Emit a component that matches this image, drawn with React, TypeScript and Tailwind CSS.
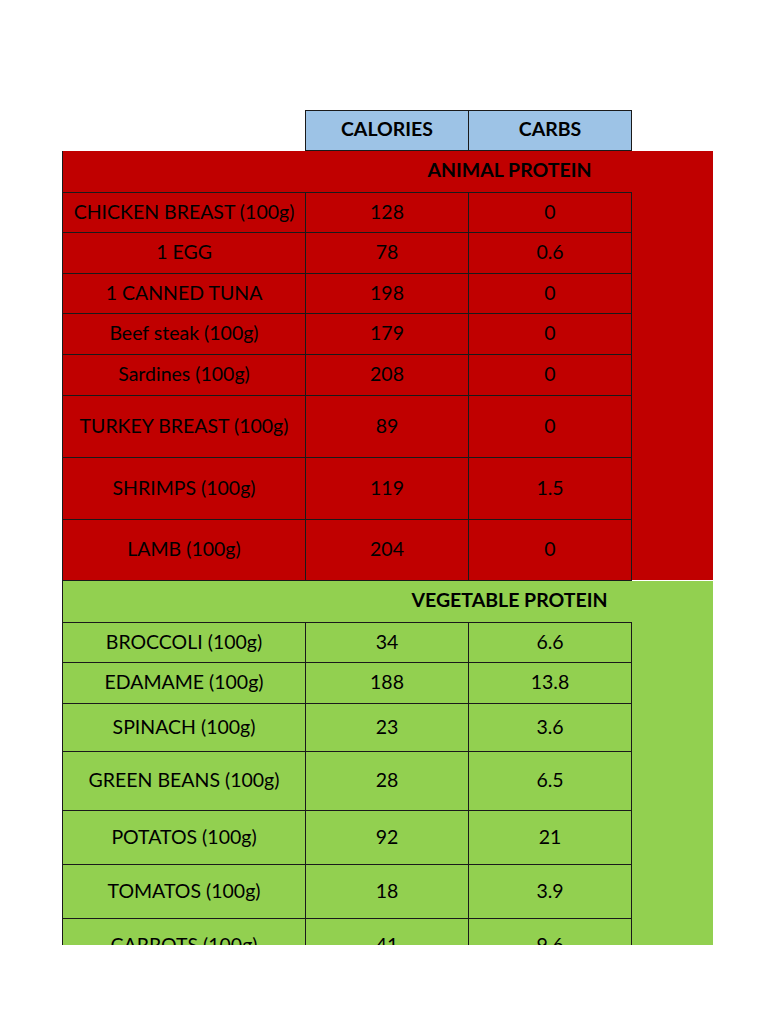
type Row = { name: string; cal: string; carbs: string; h: string }

const animal: Row[] = [
  { name: 'CHICKEN BREAST (100g)', cal: '128', carbs: '0', h: 'h-[40px]' },
  { name: '1 EGG', cal: '78', carbs: '0.6', h: 'h-[41px]' },
  { name: '1 CANNED TUNA', cal: '198', carbs: '0', h: 'h-[40px]' },
  { name: 'Beef steak (100g)', cal: '179', carbs: '0', h: 'h-[41px]' },
  { name: 'Sardines (100g)', cal: '208', carbs: '0', h: 'h-[41px]' },
  { name: 'TURKEY BREAST (100g)', cal: '89', carbs: '0', h: 'h-[62px]' },
  { name: 'SHRIMPS (100g)', cal: '119', carbs: '1.5', h: 'h-[62px]' },
  { name: 'LAMB (100g)', cal: '204', carbs: '0', h: 'h-[61px]' },
]

const veg: Row[] = [
  { name: 'BROCCOLI (100g)', cal: '34', carbs: '6.6', h: 'h-[40px]' },
  { name: 'EDAMAME (100g)', cal: '188', carbs: '13.8', h: 'h-[41px]' },
  { name: 'SPINACH (100g)', cal: '23', carbs: '3.6', h: 'h-[48px]' },
  { name: 'GREEN BEANS (100g)', cal: '28', carbs: '6.5', h: 'h-[59px]' },
  { name: 'POTATOS (100g)', cal: '92', carbs: '21', h: 'h-[54px]' },
  { name: 'TOMATOS (100g)', cal: '18', carbs: '3.9', h: 'h-[54px]' },
  { name: 'CARROTS (100g)', cal: '41', carbs: '9.6', h: 'h-[54px]' },
]

const cell = 'flex items-center justify-center pb-[2px] border-r border-[#1a1a1a]'

function Section({ title, rows, bg }: { title: string; rows: Row[]; bg: string }) {
  return (
    <div className={`w-[651px] border-l border-[#1a1a1a] ${bg}`}>
      {/* section title, centred over the number columns */}
      <div className="flex h-[41px]">
        <div className="w-[243px]" />
        <div className="flex-1 flex items-center justify-center pb-[3px] font-bold">{title}</div>
      </div>
      <div className="w-[569px]">
        {rows.map((r) => (
          <div key={r.name} className={`flex border-t border-[#1a1a1a] ${r.h}`}>
            <div className={`w-[243px] ${cell}`}>{r.name}</div>
            <div className={`w-[163px] ${cell}`}>{r.cal}</div>
            <div className={`w-[163px] ${cell}`}>{r.carbs}</div>
          </div>
        ))}
      </div>
    </div>
  )
}

export default function App() {
  return (
    <div className="w-[768px] h-[1024px] bg-white text-black text-[19.5px] font-['Lato','Carlito',sans-serif]">
      <div className="h-[945px] overflow-hidden pt-[110px] pl-[62px]">
        <div className="flex pl-[243px]">
          <div className="w-[164px] h-[41px] flex items-center justify-center pb-[3px] font-bold bg-[#9dc3e6] border border-[#1a1a1a]">
            CALORIES
          </div>
          <div className="w-[163px] h-[41px] flex items-center justify-center pb-[3px] font-bold bg-[#9dc3e6] border-y border-r border-[#1a1a1a]">
            CARBS
          </div>
        </div>
        <Section title="ANIMAL PROTEIN" rows={animal} bg="bg-[#c00000]" />
        <div className="w-[570px] border-t border-[#1a1a1a]" />
        <Section title="VEGETABLE PROTEIN" rows={veg} bg="bg-[#92d050]" />
      </div>
    </div>
  )
}
